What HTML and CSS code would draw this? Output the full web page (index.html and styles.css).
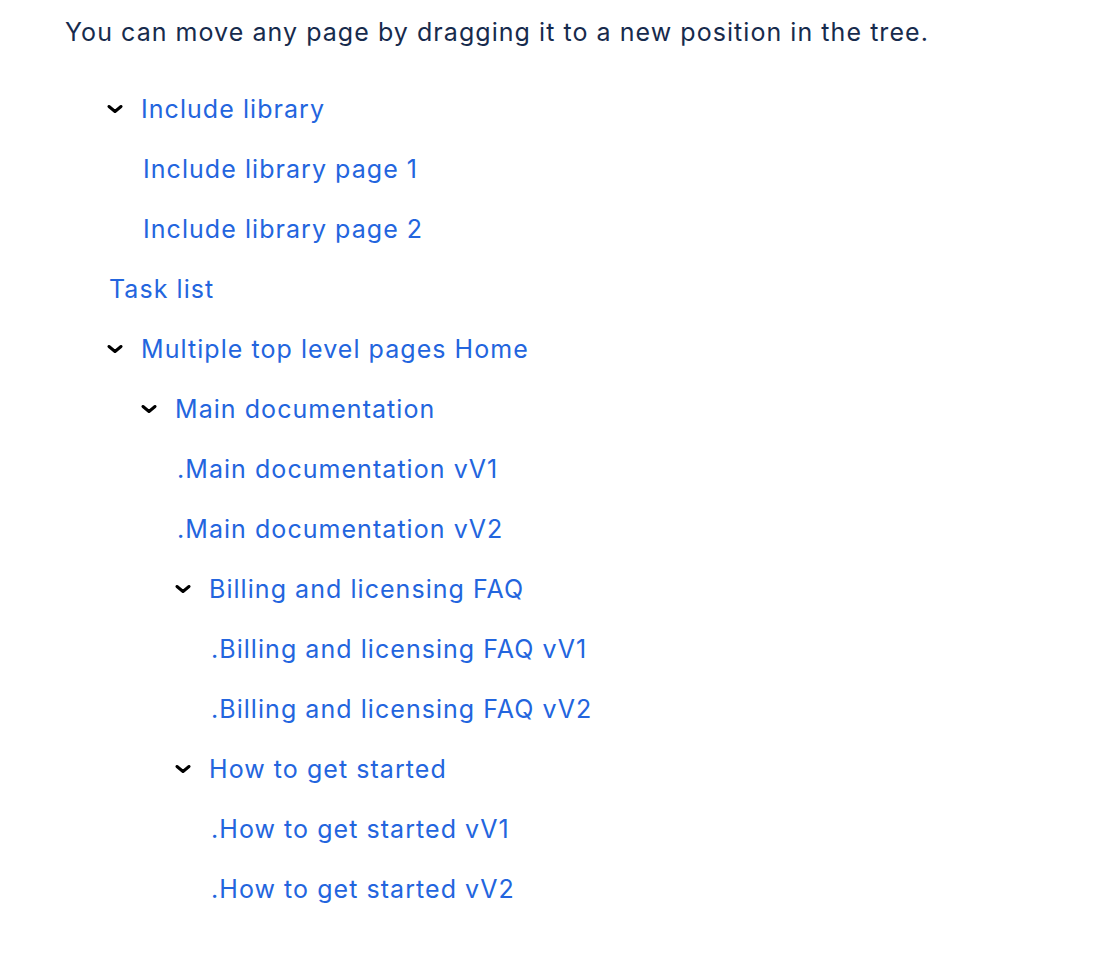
FILE: index.html
```html
<!DOCTYPE html>
<html>
<head>
<meta charset="utf-8">
<link rel="stylesheet" href="styles.css">
</head>
<body>
<main class="page">
  <p class="intro">You can move any page by dragging it to a new position in the tree.</p>
  <ul class="tree">
    <li>
      <div class="row"><span class="chev"><svg viewBox="0 0 16 8" width="16" height="8"><path d="M2 1.5 L8 6.5 L14 1.5" fill="none" stroke="#000" stroke-width="3" stroke-linecap="round" stroke-linejoin="round"/></svg></span><a href="#">Include library</a></div>
      <ul class="tree sub">
        <li><div class="row leaf"><a href="#">Include library page 1</a></div></li>
        <li><div class="row leaf"><a href="#">Include library page 2</a></div></li>
      </ul>
    </li>
    <li><div class="row leaf"><a href="#">Task list</a></div></li>
    <li>
      <div class="row"><span class="chev"><svg viewBox="0 0 16 8" width="16" height="8"><path d="M2 1.5 L8 6.5 L14 1.5" fill="none" stroke="#000" stroke-width="3" stroke-linecap="round" stroke-linejoin="round"/></svg></span><a href="#">Multiple top level pages Home</a></div>
      <ul class="tree sub">
        <li>
          <div class="row"><span class="chev"><svg viewBox="0 0 16 8" width="16" height="8"><path d="M2 1.5 L8 6.5 L14 1.5" fill="none" stroke="#000" stroke-width="3" stroke-linecap="round" stroke-linejoin="round"/></svg></span><a href="#">Main documentation</a></div>
          <ul class="tree sub">
            <li><div class="row leaf"><a href="#">.Main documentation vV1</a></div></li>
            <li><div class="row leaf"><a href="#">.Main documentation vV2</a></div></li>
            <li>
              <div class="row"><span class="chev"><svg viewBox="0 0 16 8" width="16" height="8"><path d="M2 1.5 L8 6.5 L14 1.5" fill="none" stroke="#000" stroke-width="3" stroke-linecap="round" stroke-linejoin="round"/></svg></span><a href="#">Billing and licensing FAQ</a></div>
              <ul class="tree sub">
                <li><div class="row leaf"><a href="#">.Billing and licensing FAQ vV1</a></div></li>
                <li><div class="row leaf"><a href="#">.Billing and licensing FAQ vV2</a></div></li>
              </ul>
            </li>
            <li>
              <div class="row"><span class="chev"><svg viewBox="0 0 16 8" width="16" height="8"><path d="M2 1.5 L8 6.5 L14 1.5" fill="none" stroke="#000" stroke-width="3" stroke-linecap="round" stroke-linejoin="round"/></svg></span><a href="#">How to get started</a></div>
              <ul class="tree sub">
                <li><div class="row leaf"><a href="#">.How to get started vV1</a></div></li>
                <li><div class="row leaf"><a href="#">.How to get started vV2</a></div></li>
              </ul>
            </li>
          </ul>
        </li>
      </ul>
    </li>
  </ul>
</main>
</body>
</html>
```

FILE: styles.css
```css
html, body {
  margin: 0;
  padding: 0;
  background: #ffffff;
}
body {
  font-family: Inter, "Noto Sans", "Liberation Sans", sans-serif;
  font-size: 25px;
  letter-spacing: 1.05px;
  color: #172b4d;
}
.page {
  padding: 16px 0 0 65px;
}
.intro {
  margin: 0;
  line-height: 32px;
}
.tree {
  list-style: none;
  margin: 0;
  padding: 0 0 0 42px;
}
.page > .tree {
  margin-top: 31px;
}
.tree.sub {
  padding-left: 34px;
}
.row {
  height: 60px;
  display: flex;
  align-items: center;
}
.row.leaf {
  padding-left: 2px;
}
.chev {
  width: 34px;
  flex: none;
  display: flex;
  align-items: center;
}
.chev svg {
  display: block;
}
.row a {
  color: #2365de;
  text-decoration: none;
  line-height: 32px;
}
```
